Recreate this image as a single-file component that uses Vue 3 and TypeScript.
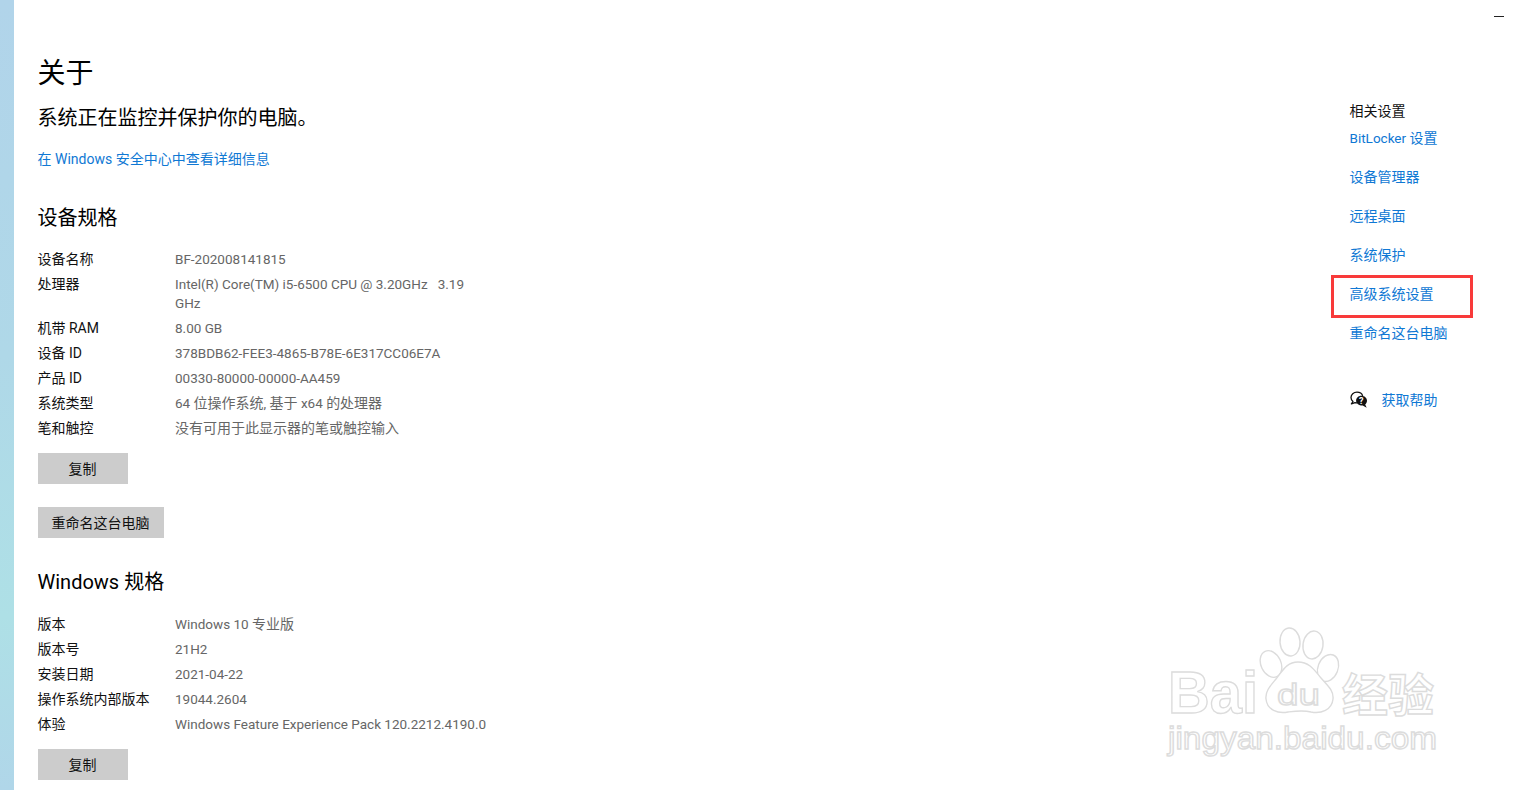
<script setup lang="ts">
interface Spec { label: string; value: string }
interface Run { text: string; latin: boolean }
const deviceSpecs: Spec[] = [
  { label: '设备名称', value: 'BF-202008141815' },
  { label: '处理器', value: 'Intel(R) Core(TM) i5-6500 CPU @ 3.20GHz   3.19 GHz' },
  { label: '机带 RAM', value: '8.00 GB' },
  { label: '设备 ID', value: '378BDB62-FEE3-4865-B78E-6E317CC06E7A' },
  { label: '产品 ID', value: '00330-80000-00000-AA459' },
  { label: '系统类型', value: '64 位操作系统, 基于 x64 的处理器' },
  { label: '笔和触控', value: '没有可用于此显示器的笔或触控输入' },
]
const windowsSpecs: Spec[] = [
  { label: '版本', value: 'Windows 10 专业版' },
  { label: '版本号', value: '21H2' },
  { label: '安装日期', value: '2021-04-22' },
  { label: '操作系统内部版本', value: '19044.2604' },
  { label: '体验', value: 'Windows Feature Experience Pack 120.2212.4190.0' },
]
const links = ['BitLocker 设置', '设备管理器', '远程桌面', '系统保护', '高级系统设置', '重命名这台电脑']

// Latin runs sit slightly smaller than the CJK ones, as in the reference's font pairing.
function runs(value: string): Run[] {
  return value
    .split(/([\u4e00-\u9fff]+)/)
    .filter((text) => text.length > 0)
    .map((text) => ({ text, latin: !/[\u4e00-\u9fff]/.test(text) }))
}
</script>

<template>
  <div class="page">
    <div class="wallpaper"></div>
    <main class="main">
      <h1 class="title">关于</h1>
      <p class="status">系统正在监控并保护你的电脑。</p>
      <a class="link security">在 Windows 安全中心中查看详细信息</a>

      <h2 class="heading device">设备规格</h2>
      <dl class="specs">
        <div v-for="s in deviceSpecs" :key="s.label" class="row">
          <dt>{{ s.label }}</dt>
          <dd><span v-for="(r, i) in runs(s.value)" :key="i" :class="{ latin: r.latin }">{{ r.text }}</span></dd>
        </div>
      </dl>
      <button class="btn copy">复制</button>
      <button class="btn rename">重命名这台电脑</button>

      <h2 class="heading windows">Windows 规格</h2>
      <dl class="specs win-specs">
        <div v-for="s in windowsSpecs" :key="s.label" class="row">
          <dt>{{ s.label }}</dt>
          <dd><span v-for="(r, i) in runs(s.value)" :key="i" :class="{ latin: r.latin }">{{ r.text }}</span></dd>
        </div>
      </dl>
      <button class="btn copy">复制</button>
    </main>

    <aside class="side">
      <div class="min"></div>
      <div class="side-title">相关设置</div>
      <a v-for="l in links" :key="l" class="link side-link"><span v-for="(r, i) in runs(l)" :key="i" :class="{ latin: r.latin }">{{ r.text }}</span></a>
      <div class="help">
        <svg class="help-icon" width="18" height="18" viewBox="0 0 18 18">
          <path d="M7 1.200C3.600 1.200 1 3.500 1 6.500c0 1.700.8 3 2 4l-1.600 2.400 3.600-1.300c.6.2 1.200.3 2 .3" fill="#fff" stroke="#111" stroke-width="1.300" stroke-linejoin="round"/>
          <path d="M7 1.200c2.800 0 5 1.600 5.700 3.700" fill="none" stroke="#111" stroke-width="1.300"/>
          <path d="M11.300 4.800c3.200 0 5.700 2.200 5.700 5 0 1.500-.7 2.800-1.800 3.700l1.500 3.300-4-2.200c-3.300.2-6.600-1.800-6.600-4.800 0-2.800 2.300-5 5.200-5z" fill="#111"/>
          <text x="11.300" y="13.200" class="help-q">?</text>
        </svg>
        <a class="link">获取帮助</a>
      </div>
    </aside>

    <div class="highlight"></div>

    <svg class="watermark" width="310" height="170" viewBox="0 0 310 170">
      <g fill="#fff" stroke="#dcdcdc" stroke-width="1.400">
        <ellipse cx="121" cy="54" rx="10" ry="14" transform="rotate(-25 121 54)"/>
        <ellipse cx="140" cy="32" rx="10" ry="14" transform="rotate(-5 140 32)"/>
        <ellipse cx="163" cy="35" rx="10" ry="14" transform="rotate(8 163 35)"/>
        <ellipse cx="178" cy="58" rx="10" ry="14" transform="rotate(22 178 58)"/>
        <path d="M148 52c-12 0-16 10-22 17-5 6-11 12-10 20 1 11 12 15 22 13 8-1 15-2 23 0 10 2 21-2 22-13 1-9-7-15-12-21-6-7-11-16-23-16z"/>
        <text x="18" y="103" class="wm-bai" textLength="90" lengthAdjust="spacingAndGlyphs">Bai</text>
        <text x="127" y="95" class="wm-du" textLength="43" lengthAdjust="spacingAndGlyphs">du</text>
        <text x="192" y="102" class="wm-jy" textLength="92" lengthAdjust="spacingAndGlyphs">经验</text>
        <text x="18" y="139" class="wm-url" textLength="269" lengthAdjust="spacingAndGlyphs">jingyan.baidu.com</text>
      </g>
    </svg>
  </div>
</template>

<style scoped>
.page {
  position: relative;
  display: flex;
  width: 1520px;
  height: 790px;
  overflow: hidden;
  background: #fff;
  color: #000;
  font-family: Roboto, "Noto Sans CJK SC", sans-serif;
  font-size: 14px;
}
.wallpaper {
  flex: 0 0 14px;
  background: linear-gradient(180deg, #b1d4ea 0%, #afd8e8 45%, #aee0e6 78%, #b0d6e9 100%);
}
.main {
  flex: 1;
  padding-left: 23.5px;
  display: flex;
  flex-direction: column;
  align-items: flex-start;
}
.title {
  margin: 54px 0 0;
  font-size: 28px;
  font-weight: 400;
  line-height: 40px;
}
.status {
  margin: 10px 0 0;
  font-size: 20px;
  line-height: 28px;
}
.link {
  color: #0f78d4;
  font-size: 14px;
  line-height: 20px;
  white-space: pre;
}
.latin { font-size: 13.5px; }
.security {
  margin-top: 17px;
  display: block;
}
.heading {
  margin: 0;
  font-size: 20px;
  font-weight: 400;
  line-height: 28px;
}
.device { margin-top: 35px; }
.windows { margin-top: 30px; }
.specs {
  margin: 14px 0 0;
  display: flex;
  flex-direction: column;
}
.win-specs { margin-top: 15px; }
.row {
  display: flex;
  padding: 3px 0 2px;
}
dt {
  flex: 0 0 137.5px;
  line-height: 20px;
  color: #111;
}
dd {
  margin: 0;
  padding-top: 1px;
  width: 300px;
  color: #666;
  line-height: 19px;
  white-space: pre-wrap;
}
.specs .row:last-child dd { white-space: nowrap; }
.btn {
  display: block;
  height: 31px;
  border: 0;
  padding: 0 0 2px;
  background: #ccc;
  color: #111;
  font: inherit;
}
.copy { width: 90px; margin-top: 13px; }
.rename { width: 126px; margin-top: 23px; }
.side {
  flex: 0 0 170.5px;
  display: flex;
  flex-direction: column;
  align-items: flex-start;
  position: relative;
  padding-top: 101px;
}
.min {
  position: absolute;
  top: 16px;
  left: 144.500px;
  width: 10px;
  height: 1px;
  background: #222;
}
.side-title {
  line-height: 20px;
  color: #111;
}
.side-link {
  display: block;
  height: 39px;
  padding-top: 7px;
  box-sizing: border-box;
}
.help {
  margin-top: 35px;
  display: flex;
  align-items: center;
  gap: 14px;
}
.help-icon { flex: none; }
.help-q {
  font-size: 9px;
  font-weight: 700;
  fill: #fff;
  stroke: none;
  text-anchor: middle;
}
.highlight {
  position: absolute;
  left: 1331px;
  top: 275px;
  width: 142px;
  height: 43px;
  box-sizing: border-box;
  border: 3px solid #f83a3a;
}
.watermark {
  position: absolute;
  left: 1150px;
  top: 610px;
}
.wm-bai {
  font-family: "Liberation Sans", sans-serif;
  font-size: 60px;
  font-weight: 700;
}
.wm-du {
  font-family: "Liberation Sans", sans-serif;
  font-size: 30px;
}
.wm-jy {
  font-family: "Noto Sans CJK SC", sans-serif;
  font-size: 45px;
  font-weight: 700;
}
.wm-url {
  font-family: "Liberation Sans", sans-serif;
  font-size: 31px;
}
</style>
